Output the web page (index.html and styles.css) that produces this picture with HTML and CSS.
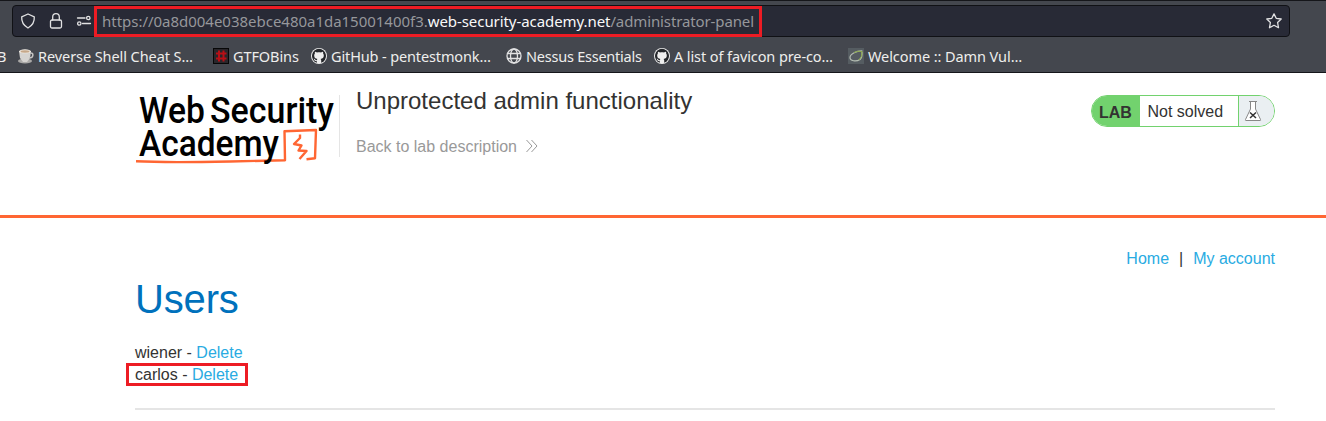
FILE: index.html
```html
<!DOCTYPE html>
<html lang="en">
<head>
<meta charset="utf-8">
<title>Unprotected admin functionality</title>
<link rel="stylesheet" href="styles.css">
</head>
<body>
<svg width="0" height="0" class="defs">
  <symbol id="github" viewBox="0 0 16 16"><circle cx="8" cy="8" r="8" fill="#eee"/><path fill-rule="evenodd" d="M8 .8a7.200 7.200 0 0 0-2.200 14v-1.700c-1.500.3-2.200-.4-2.600-1.300-.3-.6-.7-.8-.7-1 .9-.2 1.500.4 1.900 1 .4.600 1 .5 1.500.2 0-.500.300-.900.500-1.100-2.100-.3-3.200-1.400-3.200-3.500 0-.8.3-1.400.7-1.900-.2-.6-.1-1.200.1-1.800.8 0 1.300.3 2 .8 1.300-.300 2.700-.3 4 0 .7-.5 1.200-.8 2-.8.2.6.3 1.200.1 1.800.4.500.7 1.100.7 1.900 0 2.100-1.200 3.200-3.200 3.500.4.400.6.900.6 1.500v2.400A7.200 7.200 0 0 0 8 .8z" fill="#24262a"/></symbol>
</svg>
<div class="browser">
  <div class="urlbar">
    <svg class="ui-icon shield" width="16" height="16" viewBox="0 0 16 16"><path d="M8 1L14.300 3.800C14.600 8.500 12.500 12.500 8 15C3.500 12.500 1.400 8.500 1.700 3.800Z"/></svg>
    <svg class="ui-icon lock" width="16" height="16" viewBox="0 0 16 16"><rect x="2.500" y="7" width="11" height="8" rx="1.500"/><path d="M4.700 7V4a3.300 3.300 0 0 1 6.600 0v3"/></svg>
    <svg class="ui-icon perms" width="16" height="16" viewBox="0 0 16 16"><path d="M1.500 5H9M6.500 10.500H14.500"/><circle cx="12.300" cy="5" r="1.700"/><circle cx="3.300" cy="10.500" r="1.700"/></svg>
    <div class="url"><span class="u1">https://0a8d004e038ebce480a1da15001400f3.</span><span class="domain">web-security-academy.net</span><span class="u3">/administrator-panel</span></div>
    <svg class="ui-icon star" width="16" height="16" viewBox="0 0 16 16"><path d="M8 .9L10.200 5.300 15.200 6 11.600 9.500 12.500 14.700 8 12.300 3.500 14.700 4.400 9.500.8 6 5.800 5.300Z"/></svg>
  </div>
  <div class="bookmarks">
    <span class="cut">B</span>
    <div class="bm b1"><svg width="16" height="16" viewBox="0 0 16 16"><ellipse cx="7" cy="13" rx="7" ry="2.500" fill="#aaa9a7"/><path d="M1 3h12l-1 7-3 4H5l-3-4z" fill="#d5d3d0"/><path d="M12 5c4-1 4 5-1 5" fill="none" stroke="#c5c4c2" stroke-width="1.500"/><ellipse cx="7" cy="3.300" rx="6" ry="2" fill="#f4eee6"/><ellipse cx="7" cy="3.500" rx="4.500" ry="1.200" fill="#c5a789"/></svg><span>Reverse Shell Cheat S…</span></div>
    <div class="bm b2"><svg width="16" height="16" viewBox="0 0 16 16"><rect x=".5" y=".5" width="15" height="15" fill="#29262b" stroke="#070707"/><path d="M6 2.500v11M10.500 2.500v11M3 5.500h10.500M3 10.500h10.500" stroke="#b80f16" stroke-width="2"/></svg><span>GTFOBins</span></div>
    <div class="bm b3"><svg width="16" height="16"><use href="#github"/></svg><span>GitHub - pentestmonk…</span></div>
    <div class="bm b4"><svg class="ui-icon" width="16" height="16" viewBox="0 0 16 16"><circle cx="8" cy="8" r="7"/><ellipse cx="8" cy="8" rx="3.500" ry="7"/><path d="M1.500 5.500h13M1.500 10.500h13"/></svg><span>Nessus Essentials</span></div>
    <div class="bm b5"><svg width="16" height="16"><use href="#github"/></svg><span>A list of favicon pre-co…</span></div>
    <div class="bm b6"><svg width="16" height="16" viewBox="0 0 16 16"><rect width="16" height="16" fill="#555c61"/><path d="M14.500 3C9 2.500 2 6 2 9.500S8 14 12 11.500Q14.500 9 14 4" fill="none" stroke="#b5bdb3" stroke-width="1.200"/><path d="M6 4.500Q10 2.500 14 3.500Q14.500 9 11 12" fill="none" stroke="#8cab4b" stroke-width="1"/></svg><span>Welcome :: Damn Vul…</span></div>
  </div>
</div>
<header class="lab-header">
  <svg class="logo" width="204" height="75" viewBox="0 0 204 75">
    <g class="logo-line"><path d="M1 72.300C30 73.800 60 73.200 95 72.500L150 71.200L149.500 42.300L181 41L180 69.300L171.500 70.300"/><path d="M165 45.500L165 49L159 55L166.500 56.500L163.500 61.500L171.500 62L164.500 70"/></g>
    <g class="logo-text"><text x="4" y="34" textLength="66" lengthAdjust="spacingAndGlyphs">Web</text><text x="75" y="34" textLength="124" lengthAdjust="spacingAndGlyphs">Security</text><text x="4" y="67" textLength="140" lengthAdjust="spacingAndGlyphs">Academy</text></g>
  </svg>
  <div class="title-block">
    <h2>Unprotected admin functionality</h2>
    <a class="back">Back to lab description <svg width="12" height="14" viewBox="0 0 12 14"><path d="M.5 1L6 7L.5 13M5.500 1L11 7L5.500 13"/></svg></a>
  </div>
  <div class="status">
    <span class="lab">LAB</span><span class="state">Not solved</span>
    <span class="flask"><svg width="18" height="22" viewBox="0 0 18 22"><path class="glass" d="M6.500 2V9L1.500 19.500Q1 20.500 2 20.500H16Q17 20.500 16.500 19.500L11.500 9V2"/><path class="glass" d="M5 1.500H13"/><path class="cross" d="M6 12.500L12 18M12 12.500L6 18"/></svg></span>
  </div>
</header>
<main>
  <nav><a>Home</a><span>|</span><a>My account</a></nav>
  <h1>Users</h1>
  <div class="users">
    <div class="user">wiener - <a>Delete</a></div>
    <div class="user marked">carlos - <a>Delete</a></div>
  </div>
  <hr>
</main>
</body>
</html>
```
FILE: styles.css
```css
* { box-sizing: border-box; }
body { margin: 0; height: 421px; overflow: hidden; background: #fff; color: #333332; font: 16px/22px "Liberation Sans", Arial, sans-serif; }
.defs { display: block; }
svg { flex: none; }
.browser { height: 73px; padding-top: 4px; background: #44474e; border-top: 1px solid #15161a; border-bottom: 1px solid #15161a; font-family: "Noto Sans", sans-serif; color: #eeeeec; }
.urlbar { display: flex; align-items: center; width: 1278px; height: 32px; margin-left: 12px; padding: 0 7px; background: #282a36; border: 1px solid #101115; border-radius: 4px; }
.ui-icon { fill: none; stroke: #e2e2e3; stroke-width: 1.3; stroke-linejoin: round; stroke-linecap: round; }
.lock { margin-left: 12px; }
.perms { margin-left: 12px; }
.url { display: flex; align-items: center; width: 668px; height: 31px; margin-left: 2px; padding-left: 5px; border: 3px solid #ed1c24; font-size: 15px; white-space: pre; color: #96979b; }
.u1 { letter-spacing: -0.02px; }
.domain { color: #f8f8f8; letter-spacing: -0.07px; }
.u3 { letter-spacing: -0.12px; }
.star { margin-left: auto; }
.bookmarks { display: flex; height: 34px; padding-top: 3px; align-items: center; font-size: 14.500px; white-space: nowrap; }
.cut { width: 18px; margin-left: -3px; margin-right: 3px; }
.bm { display: flex; align-items: center; gap: 4px; flex: none; }
.b1 { width: 195px; letter-spacing: -0.08px; }
.b2 { width: 98px; letter-spacing: -0.1px; }
.b3 { width: 195px; letter-spacing: -0.13px; }
.b4 { width: 148px; letter-spacing: -0.23px; }
.b5 { width: 194px; letter-spacing: -0.1px; }
.b6 { width: 180px; letter-spacing: -0.08px; }
.lab-header { display: flex; height: 145px; padding: 20px 51px 0 135px; border-bottom: 3px solid #ff6633; align-items: flex-start; }
.logo { margin-top: -4px; }
.logo-text { font: 500 37px Roboto, sans-serif; fill: #000; }
.logo-line { fill: none; stroke: #ff6633; stroke-width: 2.4; stroke-linejoin: round; }
.title-block { height: 62px; margin-top: 2px; padding-left: 16px; border-left: 1px solid #e5e5e5; }
h2 { margin: -6px 0 0; font-size: 24px; line-height: 24px; font-weight: 400; }
.back { display: flex; align-items: center; gap: 9px; margin-top: 23px; color: #999; }
.back svg { fill: none; stroke: #999; margin-top: -2px; }
.status { display: flex; width: 184px; height: 32px; margin: 2px 0 0 auto; overflow: hidden; border: 1px solid #72d26e; border-radius: 16px; line-height: 32px; }
.lab { width: 48px; padding-left: 7px; background: #72d26e; font-weight: 700; line-height: 34px; }
.state { width: 98px; padding-left: 7.5px; }
.flask { display: flex; flex: 1; align-items: center; padding-left: 5px; background: #eaeff2; border-left: 1px solid #72d26e; }
.glass { fill: #fff; stroke: #888; }
.cross { stroke: #333; stroke-width: 1.5; }
main { padding: 30px 51px 0 135px; }
nav { display: flex; justify-content: flex-end; gap: 10px; }
main a { color: #29abe2; }
h1 { margin: 7px 0 0; font-size: 40px; line-height: 44px; font-weight: 400; letter-spacing: -0.15px; color: #0071bc; }
.users { margin-top: 21px; }
.user { height: 22px; }
.marked { width: 122px; height: 23px; margin-top: -1px; margin-left: -9px; border: 3px solid #ed1c24; padding-left: 6px; line-height: 17px; }
hr { margin: 22px 0 0; border: 0; height: 2px; background: #e5e5e5; }
```
